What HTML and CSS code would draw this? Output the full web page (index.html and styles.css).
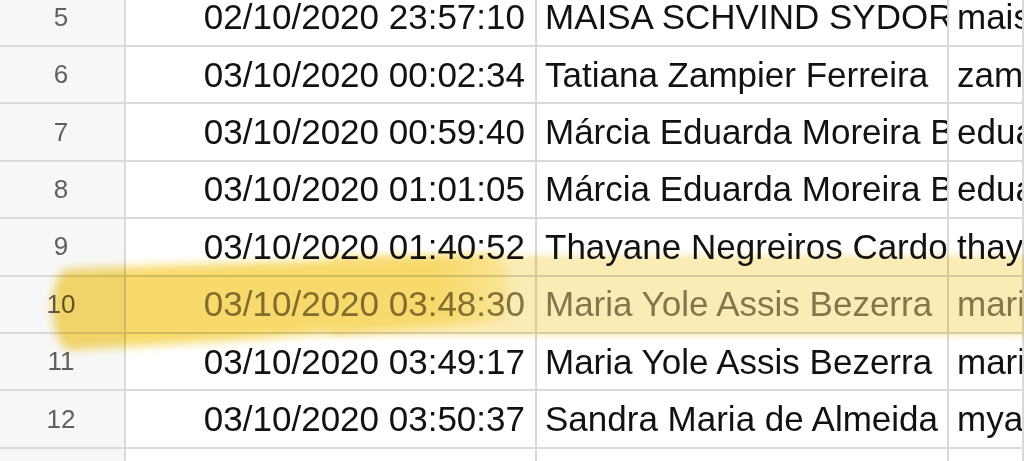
FILE: index.html
```html
<!DOCTYPE html>
<html lang="pt">
<head>
<meta charset="utf-8">
<title>Planilha</title>
<link rel="stylesheet" href="styles.css">
</head>
<body>
<div class="page">
  <div class="sheet">
    <div class="row"><div class="rh">5</div><div class="c date">02/10/2020 23:57:10</div><div class="c name">MAISA SCHVIND SYDOR</div><div class="c mail">maisasydor@gmail.com</div></div>
    <div class="row"><div class="rh">6</div><div class="c date">03/10/2020 00:02:34</div><div class="c name">Tatiana Zampier Ferreira</div><div class="c mail">zampier.tati@gmail.com</div></div>
    <div class="row"><div class="rh">7</div><div class="c date">03/10/2020 00:59:40</div><div class="c name">Márcia Eduarda Moreira Barbosa</div><div class="c mail">eduardamoreira@gmail.com</div></div>
    <div class="row"><div class="rh">8</div><div class="c date">03/10/2020 01:01:05</div><div class="c name">Márcia Eduarda Moreira Barbosa</div><div class="c mail">eduardamoreira@gmail.com</div></div>
    <div class="row"><div class="rh">9</div><div class="c date">03/10/2020 01:40:52</div><div class="c name">Thayane Negreiros Cardoso</div><div class="c mail">thayanenegreiros@gmail.com</div></div>
    <div class="row marked"><div class="rh">10</div><div class="c date">03/10/2020 03:48:30</div><div class="c name">Maria Yole Assis Bezerra</div><div class="c mail">mariayole@gmail.com</div></div>
    <div class="row"><div class="rh">11</div><div class="c date">03/10/2020 03:49:17</div><div class="c name">Maria Yole Assis Bezerra</div><div class="c mail">mariayole@gmail.com</div></div>
    <div class="row"><div class="rh">12</div><div class="c date">03/10/2020 03:50:37</div><div class="c name">Sandra Maria de Almeida</div><div class="c mail">myalmeida@gmail.com</div></div>
    <div class="row"><div class="rh">13</div><div class="c date">03/10/2020 04:12:08</div><div class="c name">Luciana Pereira da Silva</div><div class="c mail">lucianaps@gmail.com</div></div>
  </div>
  <svg class="marker" viewBox="0 0 1024 461" width="1024" height="461" aria-hidden="true">
    <defs>
      <filter id="soft" x="-10%" y="-50%" width="120%" height="200%">
        <feGaussianBlur stdDeviation="3"/>
      </filter>
      <filter id="soft2" x="-10%" y="-50%" width="120%" height="200%">
        <feGaussianBlur stdDeviation="5"/>
      </filter>
      <linearGradient id="fadeR" x1="0" x2="1" y1="0" y2="0">
        <stop offset="0" stop-color="#f8da6c"/>
        <stop offset="0.85" stop-color="#f8da6c"/>
        <stop offset="1" stop-color="#fae596"/>
      </linearGradient>
    </defs>
    <rect x="330" y="255" width="720" height="81" fill="#fbebb4" filter="url(#soft)"/>
    <path d="M68 269 C 200 264, 360 259, 492 254 C 512 256, 516 318, 496 322 C 380 330, 220 342, 70 350 C 48 346, 46 274, 68 269 Z" fill="url(#fadeR)" filter="url(#soft2)"/>
  </svg>
</div>
</body>
</html>
```

FILE: styles.css
```css
* { box-sizing: border-box; }
html, body {
  margin: 0;
  padding: 0;
  background: #ffffff;
}
.page {
  position: relative;
  width: 1024px;
  height: 461px;
  overflow: hidden;
  font-family: "Liberation Sans", Arial, sans-serif;
}
.sheet {
  margin-top: -10.4px;
  display: flex;
  flex-direction: column;
}
.row {
  display: grid;
  grid-template-columns: 126px 411px 412px 1fr;
  height: 57.4px;
  flex: none;
}
.row > div {
  border-bottom: 2px solid #dadada;
  border-right: 2px solid #d9d9d9;
  display: flex;
  align-items: center;
  white-space: nowrap;
  overflow: hidden;
}
.rh {
  background: #f7f7f7;
  justify-content: center;
  color: #606060;
  font-size: 26px;
  padding-right: 2px;
}
.c {
  background: #ffffff;
  color: #121212;
  font-size: 35px;
}
.date {
  justify-content: flex-end;
  padding-right: 10px;
}
.name {
  padding-left: 8px;
}
.mail {
  padding-left: 8px;
}
.marked .c {
  color: #86806a;
}
.marker {
  position: absolute;
  left: 0;
  top: 0;
  mix-blend-mode: multiply;
  pointer-events: none;
}
```
